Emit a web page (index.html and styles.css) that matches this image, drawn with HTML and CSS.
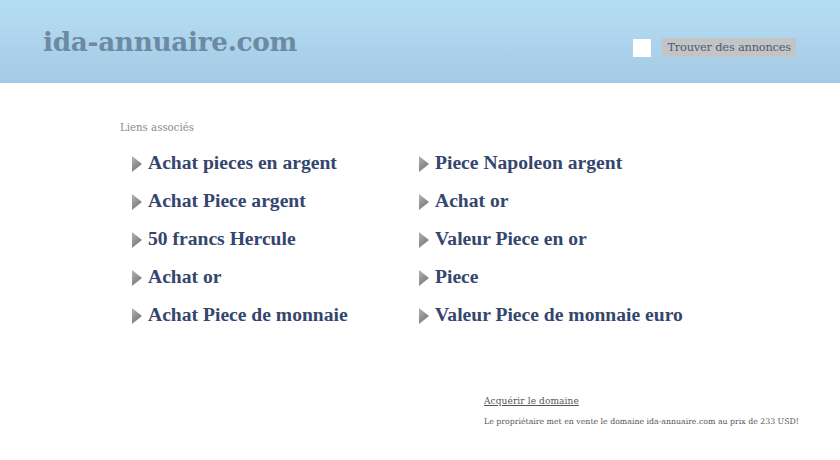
FILE: index.html
```html
<!DOCTYPE html>
<html lang="fr">
<head>
<meta charset="utf-8">
<title>ida-annuaire.com</title>
<link rel="stylesheet" href="styles.css">
</head>
<body>
<header class="top">
  <div class="logo">ida-annuaire.com</div>
  <form class="search">
    <span class="search-input"></span>
    <span class="search-btn">Trouver des annonces</span>
  </form>
</header>
<main class="content">
  <div class="label">Liens associés</div>
  <div class="links">
    <ul class="col">
      <li><span class="arrow"></span><a>Achat pieces en argent</a></li>
      <li><span class="arrow"></span><a>Achat Piece argent</a></li>
      <li><span class="arrow"></span><a>50 francs Hercule</a></li>
      <li><span class="arrow"></span><a>Achat or</a></li>
      <li><span class="arrow"></span><a>Achat Piece de monnaie</a></li>
    </ul>
    <ul class="col">
      <li><span class="arrow"></span><a>Piece Napoleon argent</a></li>
      <li><span class="arrow"></span><a>Achat or</a></li>
      <li><span class="arrow"></span><a>Valeur Piece en or</a></li>
      <li><span class="arrow"></span><a>Piece</a></li>
      <li><span class="arrow"></span><a>Valeur Piece de monnaie euro</a></li>
    </ul>
  </div>
</main>
<footer class="sale">
  <a class="buy">Acquérir le domaine</a>
  <p class="note">Le propriétaire met en vente le domaine ida-annuaire.com au prix de 233 USD!</p>
</footer>
</body>
</html>
```
FILE: styles.css
```css
html, body { margin: 0; padding: 0; }
body {
  width: 840px;
  height: 460px;
  background: #ffffff;
  font-family: "DejaVu Serif", "Liberation Serif", serif;
  overflow: hidden;
}
.top {
  height: 83px;
  background: linear-gradient(#b5def4, #a5cae4);
  display: flex;
  align-items: flex-start;
  justify-content: space-between;
}
.logo {
  margin: 24px 0 0 43px;
  font-size: 26.3px;
  font-weight: bold;
  color: #6c8aa2;
  line-height: 36px;
  letter-spacing: -0.3px;
}
.search {
  margin: 38px 44px 0 0;
  display: flex;
  align-items: center;
  gap: 11px;
}
.search-input {
  width: 18px;
  height: 18px;
  background: #ffffff;
}
.search-btn {
  background: #c2c4c6;
  color: #4c5a74;
  font-size: 11.4px;
  height: 19px;
  line-height: 19px;
  padding: 0 5px;
  letter-spacing: -0.2px;
}
.content {
  padding: 38px 0 0 120px;
}
.label {
  font-size: 10.2px;
  color: #8a8a8a;
  line-height: 14px;
}
.links {
  display: flex;
  margin-top: 10px;
  padding-left: 12px;
}
.col {
  list-style: none;
  margin: 0;
  padding: 0;
  width: 287px;
}
.col li {
  display: flex;
  align-items: center;
  height: 38px;
}
.arrow {
  width: 10px;
  height: 16px;
  background: linear-gradient(135deg, #b4b4b4 0%, #8c8c8c 55%, #6e6e6e 100%);
  clip-path: polygon(0 0, 100% 50%, 0 100%);
  margin-right: 6px;
}
.col a {
  font-family: "Liberation Serif", "DejaVu Serif", serif;
  font-size: 19.6px;
  font-weight: bold;
  color: #34466e;
  margin-top: -2px;
}
.sale {
  margin: 54px 0 0 484px;
}
.buy {
  font-size: 9px;
  color: #555;
  text-decoration: underline;
  letter-spacing: 0.1px;
}
.note {
  margin: 9px 0 0;
  font-size: 7.8px;
  color: #555;
}
```
